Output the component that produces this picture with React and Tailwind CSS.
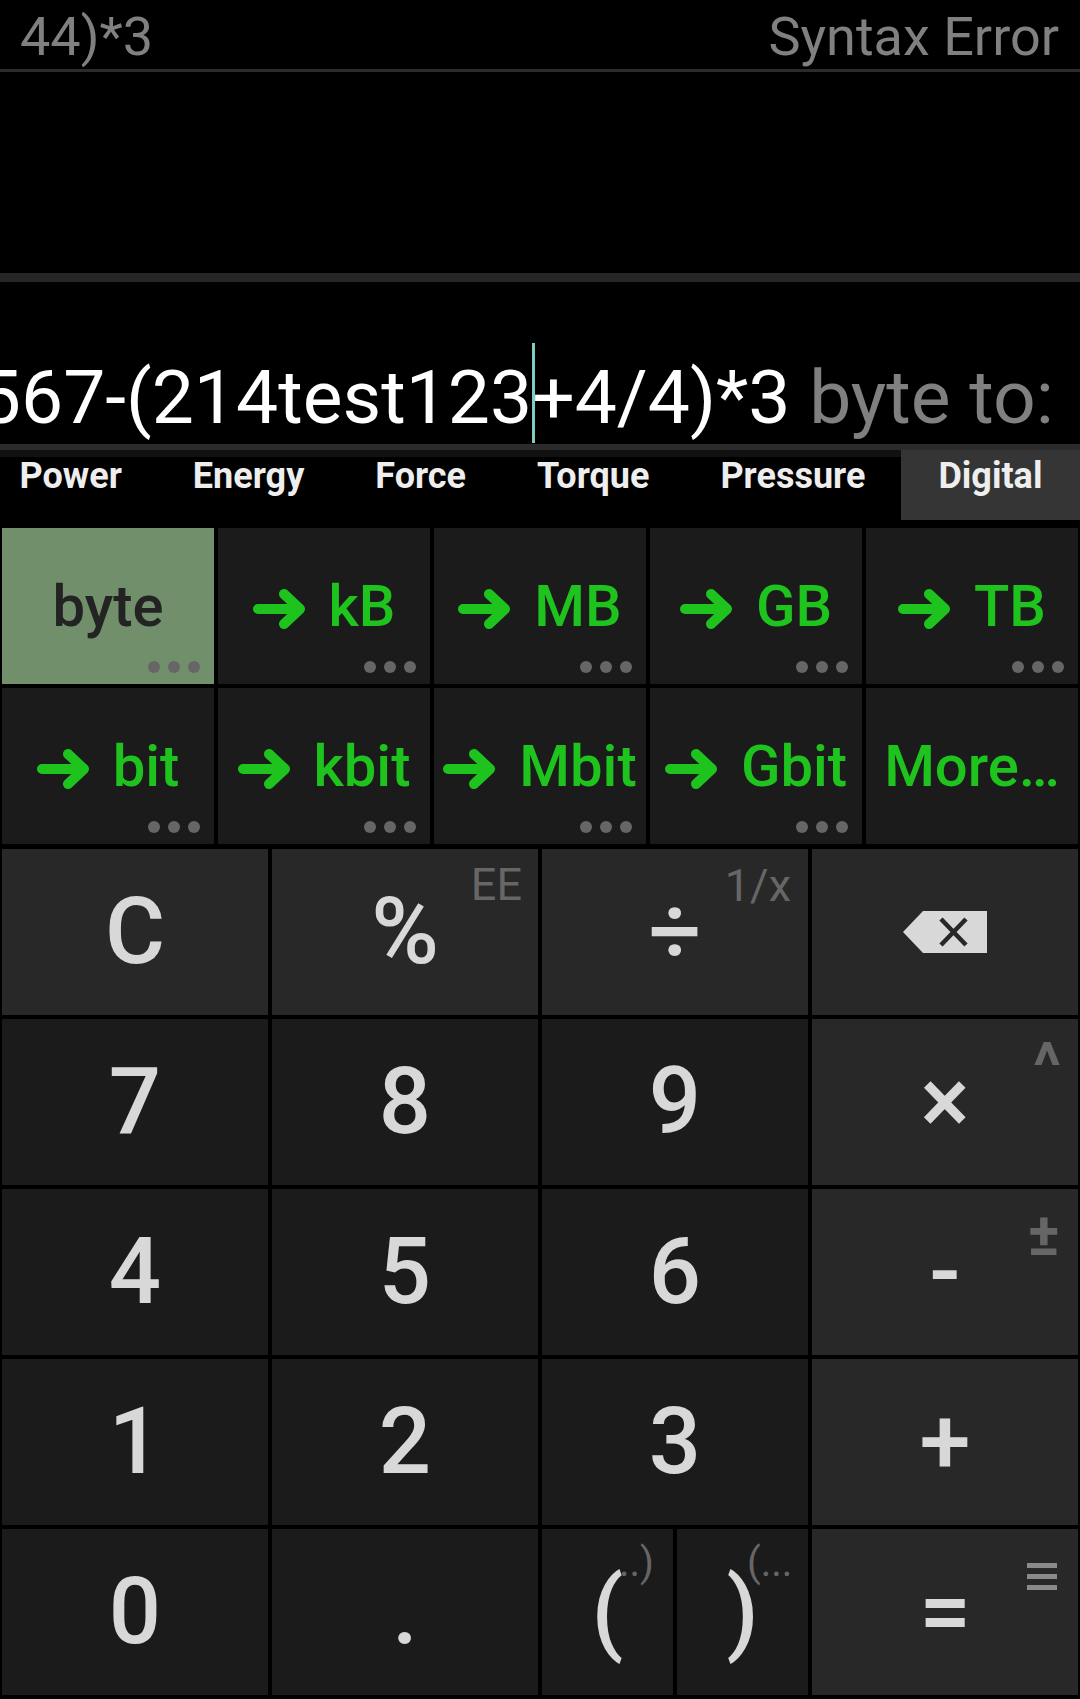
import React from 'react';

const units = [
  { label: 'byte', selected: true, dots: true },
  { label: 'kB', arrow: true, dots: true },
  { label: 'MB', arrow: true, dots: true },
  { label: 'GB', arrow: true, dots: true },
  { label: 'TB', arrow: true, dots: true },
  { label: 'bit', arrow: true, dots: true },
  { label: 'kbit', arrow: true, dots: true },
  { label: 'Mbit', arrow: true, dots: true },
  { label: 'Gbit', arrow: true, dots: true },
  { label: 'More…' },
];

const tabs = ['Power', 'Energy', 'Force', 'Torque', 'Pressure'];

const Arrow = () => (
  <svg width="54" height="40" viewBox="0 0 54 40" className="shrink-0 mt-[6px]">
    <path
      d="M5 20 H45 M31 5 L47 20 L31 35"
      fill="none"
      stroke="#1ec31e"
      strokeWidth="10"
      strokeLinecap="round"
      strokeLinejoin="round"
    />
  </svg>
);

const Dots = () => (
  <div className="absolute bottom-[11px] right-[14px] flex gap-[8px]">
    <span className="w-[12px] h-[12px] rounded-full bg-[#666]" />
    <span className="w-[12px] h-[12px] rounded-full bg-[#666]" />
    <span className="w-[12px] h-[12px] rounded-full bg-[#666]" />
  </div>
);

const UnitCell = ({ unit }) => (
  <div
    className={`relative h-[156px] flex items-center justify-center gap-[22px] ${
      unit.selected ? 'bg-[#718f6b]' : 'bg-[#1b1b1b]'
    }`}
  >
    {unit.arrow && <Arrow />}
    <span
      className={`text-[58px] leading-none font-medium whitespace-nowrap ${
        unit.selected ? 'text-[#232323]' : 'text-[#1ec31e]'
      }`}
    >
      {unit.label}
    </span>
    {unit.dots && <Dots />}
  </div>
);

const Key = ({ label, dark, children }) => (
  <div
    className={`relative h-[166px] flex items-center justify-center text-[92px] leading-none font-medium text-[#d8d8d8] ${
      dark ? 'bg-[#1b1b1b]' : 'bg-[#282828]'
    }`}
  >
    {label}
    {children}
  </div>
);

const Sup = ({ className, children }) => (
  <span className={`absolute text-[#666] ${className}`}>{children}</span>
);

const BackspaceIcon = () => (
  <svg width="84" height="42" viewBox="0 0 84 42">
    <path d="M0 21 L20 0 H84 V42 H20 Z" fill="#d8d8d8" />
    <path d="M38 8 L63 34 M63 8 L38 34" stroke="#282828" strokeWidth="4.5" />
  </svg>
);

export default function App() {
  return (
    <div className="w-[1080px] h-[1699px] bg-black overflow-hidden flex flex-col font-['Roboto','Liberation_Sans',sans-serif]">
      {/* result line */}
      <div className="h-[69px] flex justify-between items-start pt-[10px] pl-[20px] pr-[21px] text-[54px] leading-[54px] text-[#808080] whitespace-nowrap">
        <span>44)*3</span>
        <span>Syntax Error</span>
      </div>
      <div className="h-[3px] bg-[#2b2b2b]" />
      <div className="h-[201px]" />
      <div className="h-[9px] bg-[#262626]" />

      {/* expression */}
      <div className="h-[162px] flex justify-end overflow-hidden whitespace-nowrap pr-[26px] text-[75px] leading-[75px]">
        <span className="shrink-0 mt-[78px] text-white">1234567-(214test123</span>
        <div className="shrink-0 mt-[61px] h-[100px] w-[3px] -mr-[3px] bg-[#7ecdc0] relative z-10" />
        <span className="shrink-0 mt-[78px] text-white">+4/4)*3</span>
        <span className="shrink-0 mt-[78px] text-[#808080]">{'\u00a0'}byte to:</span>
      </div>
      <div className="h-[6px] bg-[#2b2b2b]" />

      {/* category tabs */}
      <div className="h-[70px] -ml-[16px] flex bg-[linear-gradient(to_bottom,#111_7px,#000_7px)] text-[36px] leading-[36px] font-bold text-[#eeeeee] whitespace-nowrap">
        {tabs.map((t) => (
          <div key={t} className="px-[35.5px] pt-[8px]">
            {t}
          </div>
        ))}
        <div className="flex-1 flex justify-center pt-[8px] bg-[#353535]">Digital</div>
      </div>

      {/* units */}
      <div className="mt-[8px] grid grid-cols-5 gap-[4px] px-[2px]">
        {units.map((u) => (
          <UnitCell key={u.label} unit={u} />
        ))}
      </div>

      {/* keypad */}
      <div className="mt-[5px] grid grid-cols-4 gap-[4px] px-[2px]">
        <Key label="C" />
        <Key label="%">
          <Sup className="top-[13px] right-[16px] text-[45px] leading-[45px] font-normal">EE</Sup>
        </Key>
        <Key label="÷">
          <Sup className="top-[14px] right-[17px] text-[45px] leading-[45px] font-normal">1/x</Sup>
        </Key>
        <Key>
          <BackspaceIcon />
        </Key>

        <Key label="7" dark />
        <Key label="8" dark />
        <Key label="9" dark />
        <Key label="×">
          <Sup className="top-[16px] right-[17px] text-[64px] leading-[64px] font-bold">^</Sup>
        </Key>

        <Key label="4" dark />
        <Key label="5" dark />
        <Key label="6" dark />
        <Key label="-">
          <Sup className="top-[16px] right-[18px] text-[60px] leading-[60px] font-bold">±</Sup>
        </Key>

        <Key label="1" dark />
        <Key label="2" dark />
        <Key label="3" dark />
        <Key label="+" />

        <Key label="0" dark />
        <Key label="." dark />
        <div className="h-[166px] grid grid-cols-2 gap-[4px]">
          <Key label="(" dark>
            <Sup className="top-[14px] left-[77px] text-[40px] leading-[40px] font-normal">..)</Sup>
          </Key>
          <Key label=")" dark>
            <Sup className="top-[14px] left-[70px] text-[40px] leading-[40px] font-normal">(...</Sup>
          </Key>
        </div>
        <Key label="=">
          <div className="absolute top-[34px] right-[21px] flex flex-col gap-[6px]">
            <span className="w-[30px] h-[5px] bg-[#8a8a8a]" />
            <span className="w-[30px] h-[5px] bg-[#8a8a8a]" />
            <span className="w-[30px] h-[5px] bg-[#8a8a8a]" />
          </div>
        </Key>
      </div>
    </div>
  );
}
